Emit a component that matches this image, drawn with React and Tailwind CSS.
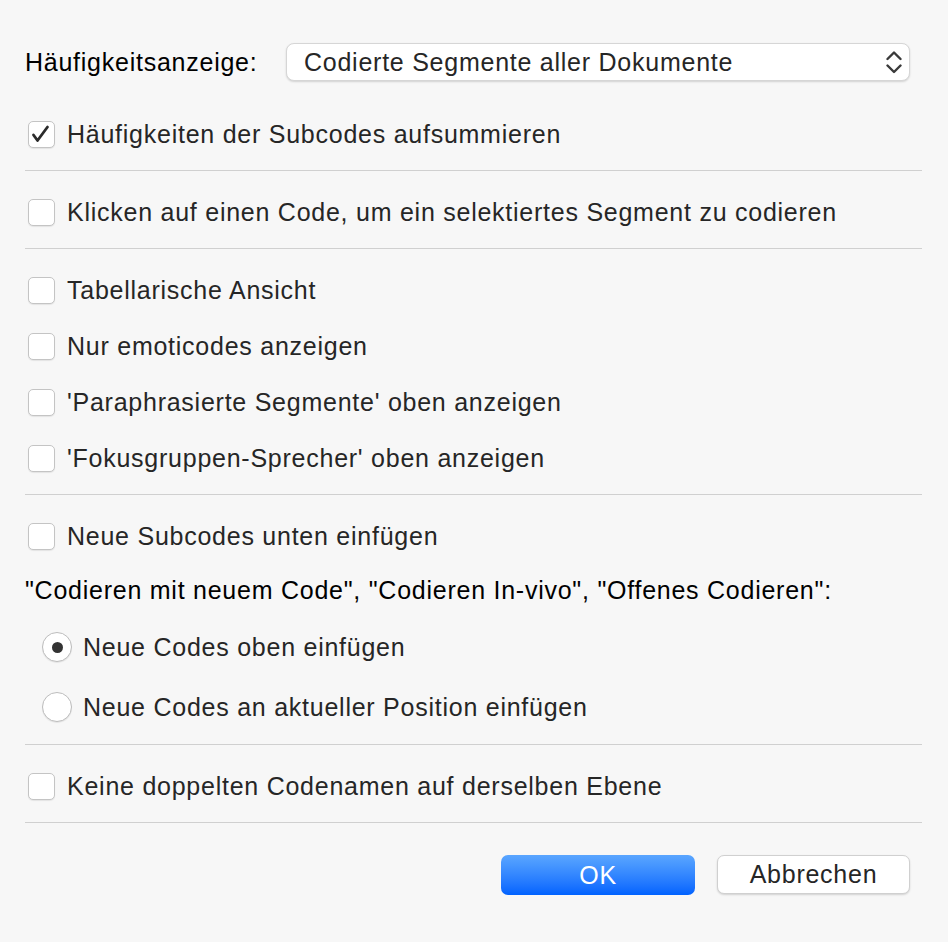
const rows1 = [
    "Tabellarische Ansicht",
    "Nur emoticodes anzeigen",
    "'Paraphrasierte Segmente' oben anzeigen",
    "'Fokusgruppen-Sprecher' oben anzeigen",
];

function CheckBox({ checked }) {
    return (
        <div className="w-[27px] h-[27px] rounded-[5px] bg-white border border-[#c4c4c4] shadow-[0_1px_1px_rgba(0,0,0,0.08)] flex items-center justify-center shrink-0">
            {checked && (
                <svg viewBox="0 0 25 25" className="w-[25px] h-[25px]" fill="none" stroke="#2b2b2b" strokeWidth="2.8" strokeLinecap="round" strokeLinejoin="round">
                    <path d="M4.5 13 L8.5 18.5 L18.5 5" />
                </svg>
            )}
        </div>
    );
}

function CheckRow({ label, checked }) {
    return (
        <div className="h-[56px] flex items-center pl-[3px] gap-[12px]">
            <CheckBox checked={checked} />
            <span className="text-[#262626]">{label}</span>
        </div>
    );
}

function Radio({ label, selected }) {
    return (
        <div className="h-[60px] flex items-center pl-[17px] gap-[11px]">
            <div className="w-[30px] h-[30px] rounded-full bg-white border border-[#bdbdbd] shadow-[0_1px_1px_rgba(0,0,0,0.08)] flex items-center justify-center shrink-0">
                {selected && <div className="w-[11px] h-[11px] rounded-full bg-[#333]" />}
            </div>
            <span className="text-[#262626]">{label}</span>
        </div>
    );
}

function Divider({ last }) {
    return <div className={`h-px bg-[#d0d0d0] mt-[8px] ${last ? "" : "mb-[13px]"}`} />;
}

export default function App() {
    return (
        <div className="w-[948px] h-[942px] bg-[#f7f7f7] pl-[25px] pr-[26px] pt-[43px] text-[25px] tracking-[0.75px] leading-none" style={{ fontFamily: '"Liberation Sans", Arial, sans-serif' }}>
            <div className="h-[38px] flex items-center pr-[12px]">
                <span className="w-[261px] text-black">Häufigkeitsanzeige:</span>
                <div className="flex-1 h-[38px] bg-white rounded-[8px] border border-[#d6d6d6] shadow-[0_1px_2px_rgba(0,0,0,0.15)] flex items-center justify-between pl-[17px] pr-[7px]">
                    <span className="text-[#262626]">Codierte Segmente aller Dokumente</span>
                    <svg viewBox="0 0 16 23" className="w-[16px] h-[23px]" fill="none" stroke="#3a3a3a" strokeWidth="2.4" strokeLinecap="round" strokeLinejoin="round">
                        <path d="M1.5 8 L8 1.5 L14.5 8" />
                        <path d="M1.5 14.5 L8 21 L14.5 14.5" />
                    </svg>
                </div>
            </div>

            <div className="mt-[25px]">
                <CheckRow label="Häufigkeiten der Subcodes aufsummieren" checked />
            </div>
            <Divider />
            <CheckRow label="Klicken auf einen Code, um ein selektiertes Segment zu codieren" />
            <Divider />
            {rows1.map((r) => (
                <CheckRow key={r} label={r} />
            ))}
            <Divider />
            <CheckRow label="Neue Subcodes unten einfügen" />
            <div className="h-[53px] flex items-center text-black">
                "Codieren mit neuem Code", "Codieren In-vivo", "Offenes Codieren":
            </div>
            <Radio label="Neue Codes oben einfügen" selected />
            <Radio label="Neue Codes an aktueller Position einfügen" />
            <div className="h-px bg-[#d0d0d0] mt-[7px] mb-[13px]" />
            <CheckRow label="Keine doppelten Codenamen auf derselben Ebene" />
            <Divider last />

            <div className="mt-[32px] flex justify-end gap-[22px] pr-[12px]">
                <button className="w-[194px] h-[40px] rounded-[7px] bg-gradient-to-b from-[#5aa6ff] to-[#0062ff] text-white">
                    OK
                </button>
                <button className="w-[193px] h-[39px] rounded-[7px] bg-white border border-[#d0d0d0] shadow-[0_1px_2px_rgba(0,0,0,0.15)] text-[#262626]">
                    Abbrechen
                </button>
            </div>
        </div>
    );
}
